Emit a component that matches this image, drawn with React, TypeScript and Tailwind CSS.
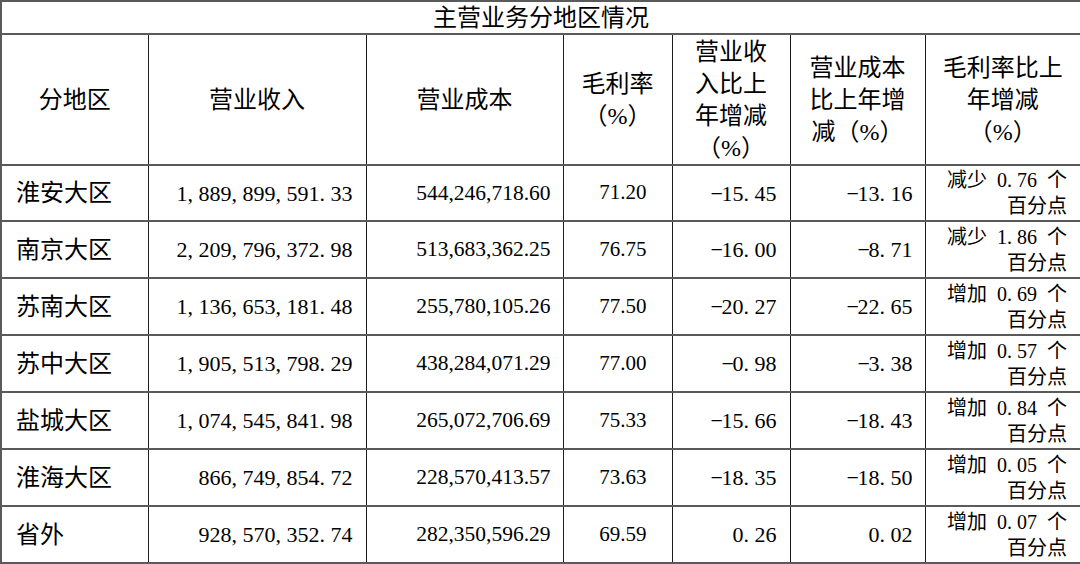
const rows = [
  { name: '淮安大区', rev: '1,889,899,591.33', cost: '544,246,718.60', gm: '71.20', revChg: '-15.45', costChg: '-13.16', gmChg: ['减少', '0.76'] },
  { name: '南京大区', rev: '2,209,796,372.98', cost: '513,683,362.25', gm: '76.75', revChg: '-16.00', costChg: '-8.71', gmChg: ['减少', '1.86'] },
  { name: '苏南大区', rev: '1,136,653,181.48', cost: '255,780,105.26', gm: '77.50', revChg: '-20.27', costChg: '-22.65', gmChg: ['增加', '0.69'] },
  { name: '苏中大区', rev: '1,905,513,798.29', cost: '438,284,071.29', gm: '77.00', revChg: '-0.98', costChg: '-3.38', gmChg: ['增加', '0.57'] },
  { name: '盐城大区', rev: '1,074,545,841.98', cost: '265,072,706.69', gm: '75.33', revChg: '-15.66', costChg: '-18.43', gmChg: ['增加', '0.84'] },
  { name: '淮海大区', rev: '866,749,854.72', cost: '228,570,413.57', gm: '73.63', revChg: '-18.35', costChg: '-18.50', gmChg: ['增加', '0.05'] },
  { name: '省外', rev: '928,570,352.74', cost: '282,350,596.29', gm: '69.59', revChg: '0.26', costChg: '0.02', gmChg: ['增加', '0.07'] },
]

// half-width "SimSun" style digits: every char sits in a 0.5em box
function Mono({ v }: { v: string }) {
  return (
    <>
      {v.split('').map((c, i) =>
        c === ',' || c === '.' ? (
          <span key={i} className="inline-block w-[0.5em] text-left">{c}</span>
        ) : c === '-' ? (
          <span key={i} className="inline-block w-[0.5em] text-center">−</span>
        ) : (
          <span key={i} className="inline-block w-[0.5em] text-center">{c}</span>
        )
      )}
    </>
  )
}

const cell = 'border-y-2 border-y-[#5a5a5a] border-x border-x-[#1c1c1c] p-0'

export default function App() {
  return (
    <div className="w-[1080px] h-[564px] overflow-hidden bg-white text-black font-['Liberation_Serif','Noto_Sans_CJK_SC',serif]">
      <table className="w-[1080px] table-fixed border-collapse border-2 border-[#5a5a5a]">
        <colgroup>
          <col className="w-[147px]" />
          <col className="w-[218px]" />
          <col className="w-[197px]" />
          <col className="w-[109px]" />
          <col className="w-[118px]" />
          <col className="w-[135px]" />
          <col className="w-[156px]" />
        </colgroup>
        <thead>
          <tr className="h-[33px]">
            <th colSpan={7} className={`${cell} text-[24px] font-normal leading-[30px] text-center`}>
              主营业务分地区情况
            </th>
          </tr>
          <tr className="h-[131px] text-[24px] leading-[32px] font-normal text-center">
            <th className={`${cell} font-normal`}>分地区</th>
            <th className={`${cell} font-normal`}>营业收入</th>
            <th className={`${cell} font-normal`}>营业成本</th>
            <th className={`${cell} font-normal`}>
              毛利率
              <br />
              （%）
            </th>
            <th className={`${cell} font-normal`}>
              营业收
              <br />
              入比上
              <br />
              年增减
              <br />
              （%）
            </th>
            <th className={`${cell} font-normal`}>
              营业成本
              <br />
              比上年增
              <br />
              减（%）
            </th>
            <th className={`${cell} font-normal`}>
              毛利率比上
              <br />
              年增减
              <br />
              （%）
            </th>
          </tr>
        </thead>
        <tbody>
          {rows.map((r, i) => (
            <tr key={r.name} className={i === 0 ? 'h-[56px]' : 'h-[57px]'}>
              <td className={`${cell} pl-[14px] text-[24px] text-left`}>{r.name}</td>
              <td className={`${cell} pr-[13px] text-[22px] text-right whitespace-nowrap`}>
                <Mono v={r.rev} />
              </td>
              <td className={`${cell} pr-[12px] text-[21.5px] text-right`}>{r.cost}</td>
              <td className={`${cell} pr-[25px] text-[21px] text-right`}>{r.gm}</td>
              <td className={`${cell} pr-[13px] text-[22px] text-right whitespace-nowrap`}>
                <Mono v={r.revChg} />
              </td>
              <td className={`${cell} pr-[12px] text-[22px] text-right whitespace-nowrap`}>
                <Mono v={r.costChg} />
              </td>
              <td className={`${cell} pr-[13px] text-[20px] leading-[26px] text-right`}>
                <div className="whitespace-nowrap">
                  {r.gmChg[0]}
                  <Mono v={` ${r.gmChg[1]} `} />个
                </div>
                <div>百分点</div>
              </td>
            </tr>
          ))}
        </tbody>
      </table>
    </div>
  )
}
